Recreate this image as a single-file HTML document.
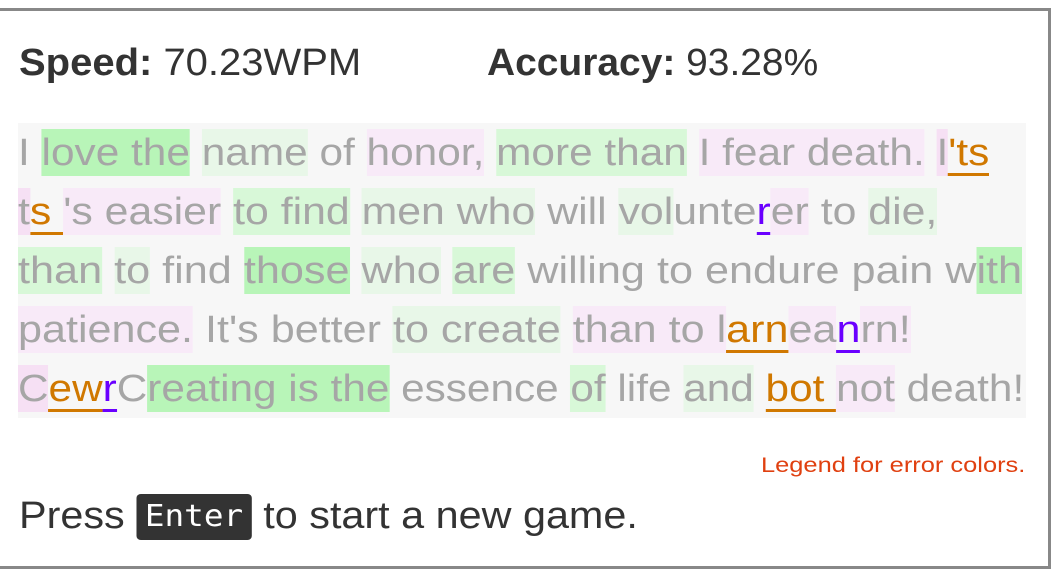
<!DOCTYPE html>
<html><head><meta charset="utf-8"><style>
body{margin:0;width:1063px;height:575px;background:#fff;overflow:hidden;font-family:"Liberation Sans","DejaVu Sans",sans-serif;position:relative}
.box{position:absolute;left:-3px;top:8px;width:1054px;height:561px;border:3px solid #888;box-sizing:border-box}
.stat{position:absolute;top:42px;font-size:38px;color:#333;white-space:nowrap;transform-origin:0 0}
.tb{position:absolute;left:18px;top:123px;width:1008px;height:295px;background:#f7f7f7}
.ln{position:absolute;left:18px;height:47px;line-height:49px;font-size:38px;color:#a6a6a6;white-space:pre;transform-origin:0 0}
.ln span{display:inline-block;height:47px}
.g{background:#b8f5b8}.g2{background:#d8f8d8}.g3{background:#e8f7e8}
.p{background:#f6e0f4}.p2{background:#f8eaf8}
.e{color:#d07800;border-bottom:3px solid #d07800;height:44px!important}
.v{color:#6a00ff;border-bottom:3px solid #6a00ff;height:44px!important}
.leg{position:absolute;left:761px;top:454px;font-size:21px;color:#e04010;white-space:nowrap;transform-origin:0 0}
.press{position:absolute;left:19px;top:494px;font-size:38px;color:#333;white-space:nowrap;transform-origin:0 0}
kbd{display:inline-block;background:#333;color:#fff;font-family:"DejaVu Sans Mono","Liberation Mono",monospace;font-size:30px;padding:5px 8px 6px;border-radius:4px;vertical-align:2px}
</style></head><body>
<div class="box"></div>
<div class="stat" data-w="342" style="left:19px"><b style="font-weight:600">Speed:</b> 70.23WPM</div>
<div class="stat" data-w="331" style="left:487px"><b style="font-weight:600">Accuracy:</b> 93.28%</div>
<div class="tb"></div>
<div class="ln" data-w="971" style="top:129px">I <span class="g">love the</span> <span class="g3">name</span> of <span class="p2">honor,</span> <span class="g2">more than</span> <span class="p2">I fear death.</span> <span class="p">I</span><span class="e">'ts</span></div>
<div class="ln" data-w="919" style="top:188px"><span class="p">t</span><span class="e">s </span><span class="p2">'s easier</span> <span class="g2">to find</span> <span class="g3">men who</span> will <span class="g3">vol</span>unte<span class="v">r</span><span class="p2">er</span> to <span class="g3">die,</span></div>
<div class="ln" data-w="1004" style="top:247px"><span class="g2">than</span> <span class="g3">to</span> find <span class="g">those</span> <span class="g3">who</span> <span class="g2">are</span> willing to endure pain w<span class="g">ith</span></div>
<div class="ln" data-w="893" style="top:306px"><span class="p2">patience.</span> It's better <span class="g3">to create</span> <span class="p2">than to l</span><span class="e">arn</span><span class="p2">ea</span><span class="v">n</span><span class="p2">rn!</span></div>
<div class="ln" data-w="1006" style="top:365px"><span class="p">C</span><span class="e">ew</span><span class="v">r</span>C<span class="g">reating is the</span> essence <span class="g2">of</span> life <span class="g3">and</span> <span class="e">bot </span><span class="p2">not</span> death!</div>
<div class="leg" data-w="264">Legend for error colors.</div>
<div class="press" data-w="619">Press <kbd>Enter</kbd> to start a new game.</div>
<script>
document.querySelectorAll('[data-w]').forEach(function(l){var w=+l.dataset.w;l.style.transform='scaleX('+(w/l.offsetWidth)+')';});
</script>
</body></html>
